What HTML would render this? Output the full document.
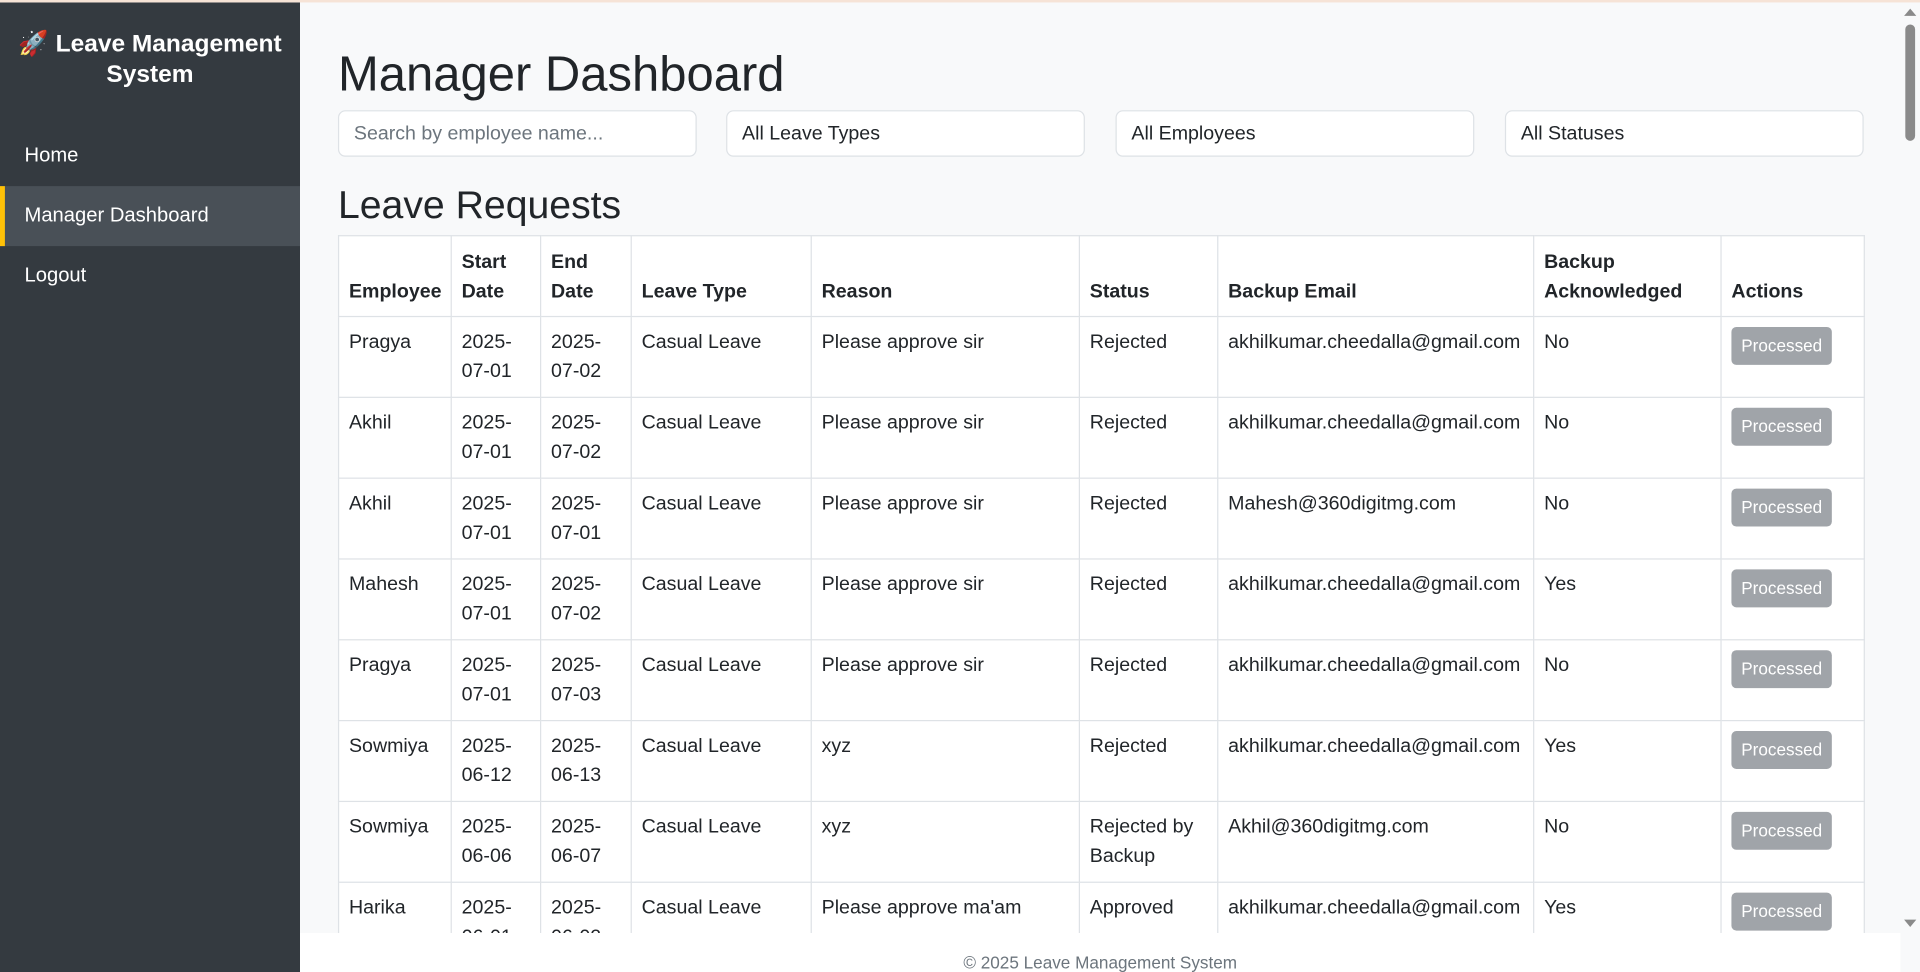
<!DOCTYPE html>
<html><head><meta charset="utf-8"><style>
*{box-sizing:border-box;margin:0;padding:0}
html,body{width:1920px;height:972px;overflow:hidden;background:#343a40}
#w{width:1568px;height:794px;transform:scale(1.22449);transform-origin:0 0;overflow:hidden;font-family:"Liberation Sans",sans-serif;color:#212529;background:#f8f9fa;position:relative;font-size:16px}
.topline{position:absolute;left:0;top:0;width:1568px;height:2px;background:#f6e3d6;z-index:5}
.side{position:absolute;left:0;top:2px;width:245px;height:792px;background:#343a40;color:#fff}
.side h1{font-size:20px;font-weight:bold;text-align:center;line-height:25px;margin-top:22px;padding:0 8px}
.nav{margin-top:29px}
.nav div{height:49px;line-height:49px;padding-left:20px;font-size:16.5px}
.nav .act{background:#495057;border-left:4px solid #ffc107;padding-left:16px}
.main{position:absolute;left:245px;top:2px;width:1307px;height:760px;overflow:hidden}
.title{position:absolute;left:31px;top:35px;font-size:40px;font-weight:500;line-height:48px}
.inp{position:absolute;top:88px;width:293px;height:38px;border:1px solid #dee2e6;border-radius:6px;background:#fff;padding:0 12px;line-height:38px;font-size:16px}
.h2{position:absolute;left:31px;top:146px;font-size:32px;font-weight:500;line-height:38px}
table{position:absolute;left:31px;top:190px;width:1246px;border-collapse:collapse;background:#fff;table-layout:fixed}
td,th{border:1px solid #dee2e6;padding:9px 8px 7px;vertical-align:top;line-height:24px;font-size:16px;text-align:left}
th{vertical-align:bottom;font-weight:bold;height:66px}
td{height:66px}
.btn{display:inline-block;background:#a0a4a9;color:#fff;font-size:14px;border-radius:4px;padding:0 8px;height:31px;line-height:31px;width:82px;text-align:center;margin-top:-1px}
.foot{position:absolute;left:245px;top:762px;width:1307px;height:32px;background:#fff;text-align:center;color:#6c757d;font-size:14px;line-height:48px}
.sb{position:absolute;left:1552px;top:2px;width:16px;height:760px;background:#f8f9fa}
.thumb{position:absolute;left:4px;top:18px;width:8px;height:95px;border-radius:4px;background:#8a8a8a}
.ar{position:absolute;left:3px;width:0;height:0;border-left:5px solid transparent;border-right:5px solid transparent}
</style></head><body><div id="w">
<div class="topline"></div>
<div class="side"><h1>🚀 Leave Management System</h1>
<div class="nav"><div>Home</div><div class="act">Manager Dashboard</div><div>Logout</div></div></div>
<div class="main">
<div class="title">Manager Dashboard</div>
<div class="inp" style="left:31px;color:#6c757d">Search by employee name...</div>
<div class="inp" style="left:348px">All Leave Types</div>
<div class="inp" style="left:666px">All Employees</div>
<div class="inp" style="left:984px">All Statuses</div>
<div class="h2">Leave Requests</div>
<table>
<colgroup><col style="width:92px"><col style="width:73px"><col style="width:74px"><col style="width:147px"><col style="width:219px"><col style="width:113px"><col style="width:258px"><col style="width:153px"><col style="width:117px"></colgroup>
<tr><th>Employee</th><th>Start Date</th><th>End Date</th><th>Leave Type</th><th>Reason</th><th>Status</th><th>Backup Email</th><th>Backup Acknowledged</th><th>Actions</th></tr>
<tr><td>Pragya</td><td>2025-07-01</td><td>2025-07-02</td><td>Casual Leave</td><td>Please approve sir</td><td>Rejected</td><td>akhilkumar.cheedalla@gmail.com</td><td>No</td><td><span class="btn">Processed</span></td></tr>
<tr><td>Akhil</td><td>2025-07-01</td><td>2025-07-02</td><td>Casual Leave</td><td>Please approve sir</td><td>Rejected</td><td>akhilkumar.cheedalla@gmail.com</td><td>No</td><td><span class="btn">Processed</span></td></tr>
<tr><td>Akhil</td><td>2025-07-01</td><td>2025-07-01</td><td>Casual Leave</td><td>Please approve sir</td><td>Rejected</td><td>Mahesh@360digitmg.com</td><td>No</td><td><span class="btn">Processed</span></td></tr>
<tr><td>Mahesh</td><td>2025-07-01</td><td>2025-07-02</td><td>Casual Leave</td><td>Please approve sir</td><td>Rejected</td><td>akhilkumar.cheedalla@gmail.com</td><td>Yes</td><td><span class="btn">Processed</span></td></tr>
<tr><td>Pragya</td><td>2025-07-01</td><td>2025-07-03</td><td>Casual Leave</td><td>Please approve sir</td><td>Rejected</td><td>akhilkumar.cheedalla@gmail.com</td><td>No</td><td><span class="btn">Processed</span></td></tr>
<tr><td>Sowmiya</td><td>2025-06-12</td><td>2025-06-13</td><td>Casual Leave</td><td>xyz</td><td>Rejected</td><td>akhilkumar.cheedalla@gmail.com</td><td>Yes</td><td><span class="btn">Processed</span></td></tr>
<tr><td>Sowmiya</td><td>2025-06-06</td><td>2025-06-07</td><td>Casual Leave</td><td>xyz</td><td>Rejected by Backup</td><td>Akhil@360digitmg.com</td><td>No</td><td><span class="btn">Processed</span></td></tr>
<tr><td>Harika</td><td>2025-06-01</td><td>2025-06-02</td><td>Casual Leave</td><td>Please approve ma'am</td><td>Approved</td><td>akhilkumar.cheedalla@gmail.com</td><td>Yes</td><td><span class="btn">Processed</span></td></tr>
</table>
</div>
<div class="foot">© 2025 Leave Management System</div>
<div class="sb"><div class="ar" style="top:5px;border-bottom:6px solid #8a8a8a"></div><div class="thumb"></div><div class="ar" style="top:749px;border-top:6px solid #8a8a8a"></div></div>
</div></body></html>
